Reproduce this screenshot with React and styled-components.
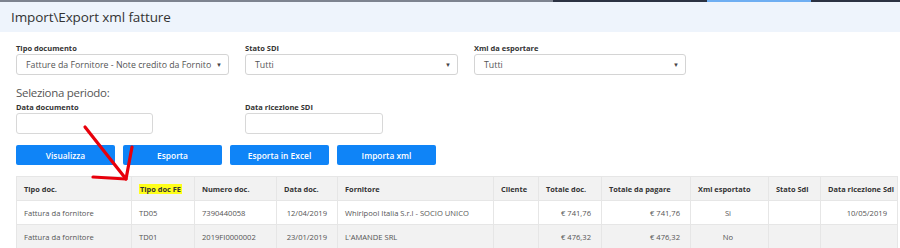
import React from "react";
import styled, { createGlobalStyle } from "styled-components";

const Global = createGlobalStyle`
  html, body { margin: 0; padding: 0; background: #fff; }
  body { font-family: "Open Sans", "Liberation Sans", sans-serif; color: #333; }
  * { box-sizing: border-box; }
`;

const Page = styled.div`
  position: relative;
  width: 900px;
  height: 248px;
  overflow: hidden;
`;

const TopStrip = styled.div`
  display: flex;
  height: 2px;
`;

const Seg = styled.div`
  width: ${(p) => p.$w}px;
  flex: ${(p) => (p.$grow ? 1 : "none")};
  background: ${(p) => p.$c};
`;

const TitleBar = styled.div`
  height: 30px;
  background: #eef4fc;
  display: flex;
  align-items: center;
  padding-left: 11px;
`;

const Title = styled.h1`
  margin: 0;
  font-size: 13.5px;
  letter-spacing: -0.1px;
  font-weight: 400;
  color: #333;
`;

const Body = styled.div`
  padding: 11px 3px 0 16px;
`;

const FieldRow = styled.div`
  display: flex;
  gap: 16px;
`;

const Field = styled.div`
  width: ${(p) => p.$w || 213}px;
  display: flex;
  flex-direction: column;
`;

const Label = styled.label`
  font-size: 7.5px;
  font-weight: 700;
  color: #333;
  line-height: 11px;
`;

const Select = styled.div`
  height: 21px;
  border: 1px solid #d4d4d4;
  border-radius: 3px;
  display: flex;
  align-items: center;
  justify-content: space-between;
  padding: 0 6px 0 9px;
  font-size: 8.8px;
  color: #555;
  background: #fff;
  white-space: nowrap;
`;

const Caret = styled.span`
  font-size: 6px;
  color: #444;
`;

const Input = styled.div`
  height: 21px;
  width: ${(p) => p.$w}px;
  border: 1px solid #d8d8d8;
  border-radius: 3px;
  background: #fff;
`;

const SectionTitle = styled.div`
  font-size: 11.5px;
  letter-spacing: -0.3px;
  color: #555;
  margin: 9px 0 0;
  line-height: 18px;
`;

const ButtonRow = styled.div`
  display: flex;
  gap: 8px;
  margin-top: 11px;
`;

const Button = styled.button`
  width: 99px;
  height: 20px;
  border: none;
  border-radius: 2px;
  background: #0f84f7;
  color: #fff;
  font-family: inherit;
  font-size: 8.4px;
  font-weight: 600;
  padding: 0;
`;

const Table = styled.table`
  margin-top: 11px;
  width: 881px;
  border-collapse: collapse;
  table-layout: fixed;
  font-size: 7.6px;
`;

const Th = styled.th`
  height: 24px;
  text-align: left;
  font-weight: 700;
  font-size: 7.4px;
  color: #333;
  padding: 0 6px 0 7px;
  background: #f2f2f2;
  border: 1px solid #e6e6e6;
  white-space: nowrap;
`;

const Highlight = styled.span`
  background: #ffff1a;
  padding: 0 1px;
`;

const Tr = styled.tr`
  background: ${(p) => (p.$alt ? "#f2f2f2" : "#fff")};
`;

const Td = styled.td`
  height: 24px;
  padding: 0 10px 0 7px;
  color: #555;
  text-align: ${(p) => p.$align || "left"};
  border: 1px solid #e6e6e6;
  white-space: nowrap;
  overflow: hidden;
`;

const Arrow = styled.svg`
  position: absolute;
  left: 0;
  top: 0;
  pointer-events: none;
`;

const cols = [115, 63, 82, 61, 156, 45, 63, 89, 78, 52, 77];

const rows = [
  ["Fattura da fornitore", "TD05", "7390440058", "12/04/2019", "Whirlpool Italia S.r.l - SOCIO UNICO", "", "€ 741,76", "€ 741,76", "Si", "", "10/05/2019"],
  ["Fattura da fornitore", "TD01", "2019FI0000002", "23/01/2019", "L'AMANDE SRL", "", "€ 476,32", "€ 476,32", "No", "", ""],
];

const align = ["left", "left", "left", "right", "left", "left", "right", "right", "center", "left", "right"];

export default function App() {
  return (
    <Page>
      <Global />
      <TopStrip>
        <Seg $w={553} $c="#7d838f" />
        <Seg $w={154} $c="#2b3242" />
        <Seg $w={104} $c="#6eaef2" />
        <Seg $grow $c="#2b3242" />
      </TopStrip>
      <TitleBar>
        <Title>Import\Export xml fatture</Title>
      </TitleBar>
      <Body>
        <FieldRow>
          <Field>
            <Label>Tipo documento</Label>
            <Select>
              Fatture da Fornitore - Note credito da Fornito <Caret>▼</Caret>
            </Select>
          </Field>
          <Field>
            <Label>Stato SDI</Label>
            <Select>
              Tutti <Caret>▼</Caret>
            </Select>
          </Field>
          <Field $w={212}>
            <Label>Xml da esportare</Label>
            <Select>
              Tutti <Caret>▼</Caret>
            </Select>
          </Field>
        </FieldRow>
        <SectionTitle>Seleziona periodo:</SectionTitle>
        <FieldRow>
          <Field>
            <Label>Data documento</Label>
            <Input $w={137} />
          </Field>
          <Field>
            <Label>Data ricezione SDI</Label>
            <Input $w={138} />
          </Field>
        </FieldRow>
        <ButtonRow>
          <Button>Visualizza</Button>
          <Button>Esporta</Button>
          <Button>Esporta in Excel</Button>
          <Button>Importa xml</Button>
        </ButtonRow>
        <Table>
          <colgroup>
            {cols.map((w, i) => (
              <col key={i} style={{ width: w }} />
            ))}
          </colgroup>
          <thead>
            <tr>
              <Th>Tipo doc.</Th>
              <Th>
                <Highlight>Tipo doc FE</Highlight>
              </Th>
              <Th>Numero doc.</Th>
              <Th>Data doc.</Th>
              <Th>Fornitore</Th>
              <Th>Cliente</Th>
              <Th>Totale doc.</Th>
              <Th>Totale da pagare</Th>
              <Th>Xml esportato</Th>
              <Th>Stato Sdi</Th>
              <Th>Data ricezione Sdi</Th>
            </tr>
          </thead>
          <tbody>
            {rows.map((r, ri) => (
              <Tr key={ri} $alt={ri % 2 === 1}>
                {r.map((c, ci) => (
                  <Td key={ci} $align={align[ci]}>
                    {c}
                  </Td>
                ))}
              </Tr>
            ))}
          </tbody>
        </Table>
      </Body>
      <Arrow width="900" height="248" viewBox="0 0 900 248">
        <g stroke="#e8000b" strokeWidth="3.2" fill="none" strokeLinecap="round" strokeLinejoin="round">
          <path d="M85 127 L126 179" />
          <path d="M132 147 L126 179 L93 177" />
        </g>
      </Arrow>
    </Page>
  );
}
